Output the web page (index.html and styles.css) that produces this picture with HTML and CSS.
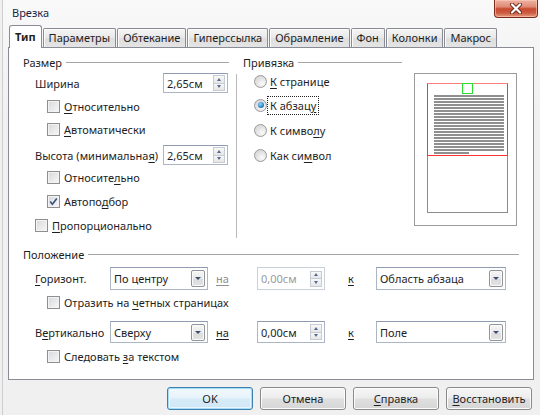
FILE: index.html
```html
<!DOCTYPE html>
<html lang="ru">
<head>
<meta charset="utf-8">
<title>Врезка</title>
<link rel="stylesheet" href="styles.css">
</head>
<body>
<div class="window">
  <div class="titlebar">
    <span class="title">Врезка</span>
    <div class="close">
      <svg width="14" height="11" viewBox="0 0 14 11"><path d="M3 1.5 L11 9.5 M11 1.5 L3 9.5" stroke="#6b2a20" stroke-width="4" stroke-linecap="round"/><path d="M3 1.5 L11 9.5 M11 1.5 L3 9.5" stroke="#fff" stroke-width="2.2" stroke-linecap="round"/></svg>
    </div>
  </div>
  <div class="tabs">
    <div class="tab active">Тип</div>
    <div class="tab">Параметры</div>
    <div class="tab">Обтекание</div>
    <div class="tab">Гиперссылка</div>
    <div class="tab">Обрамление</div>
    <div class="tab">Фон</div>
    <div class="tab">Колонки</div>
    <div class="tab">Макрос</div>
  </div>
  <div class="panel">
    <div class="top">
      <div class="col-size">
        <div class="head"><span>Размер</span><i class="rule"></i></div>
        <div class="row r1"><span class="lbl">Ширина</span><div class="spin"><span>2,65см</span><span class="arrows"><i class="up"></i><i class="down"></i></span></div></div>
        <div class="row r2 ind"><i class="cb"></i><span><u>О</u>тносительно</span></div>
        <div class="row r3 ind"><i class="cb"></i><span><u>А</u>втоматически</span></div>
        <div class="row r4"><span class="lbl">Высота (минимальна<u>я</u>)</span><div class="spin"><span>2,65см</span><span class="arrows"><i class="up"></i><i class="down"></i></span></div></div>
        <div class="row r5 ind"><i class="cb"></i><span>Относите<u>л</u>ьно</span></div>
        <div class="row r6 ind"><i class="cb checked"><svg width="11" height="11" viewBox="0 0 11 11"><path d="M2.2 5.6 L4.4 8.2 L8.8 2.4" fill="none" stroke="#3b4f85" stroke-width="1.6"/></svg></i><span>Автопо<u>д</u>бор</span></div>
        <div class="row r7 ind-s"><i class="cb"></i><span><u>П</u>ропорционально</span></div>
      </div>
      <div class="vsep"></div>
      <div class="col-anchor">
        <div class="head"><span>Привязка</span><i class="rule"></i></div>
        <div class="radio-row a1"><i class="rb"></i><span><u>К</u> странице</span></div>
        <div class="radio-row a2"><i class="rb on"></i><span class="focus">К абзац<u>у</u></span></div>
        <div class="radio-row a3"><i class="rb"></i><span>К симво<u>л</u>у</span></div>
        <div class="radio-row a4"><i class="rb"></i><span>Как си<u>м</u>вол</span></div>
      </div>
      <div class="preview">
        <div class="page">
          <div class="frame">
            <div class="anchor"></div>
            <div class="lines"></div>
            <div class="short"></div>
          </div>
        </div>
      </div>
    </div>
    <div class="position">
      <div class="head"><span>Положение</span><i class="rule"></i></div>
      <div class="prow p1">
        <span class="lbl"><u>Г</u>оризонт.</span>
        <div class="combo"><span>По центру</span><i class="drop"></i></div>
        <span class="na dis"><u>на</u></span>
        <div class="spin dis"><span>0,00см</span><span class="arrows"><i class="up"></i><i class="down"></i></span></div>
        <span class="k"><u>к</u></span>
        <div class="combo wide"><span>Область абзаца</span><i class="drop"></i></div>
      </div>
      <div class="row p2 ind"><i class="cb"></i><span>Отразить на <u>ч</u>етных страницах</span></div>
      <div class="prow p3">
        <span class="lbl">В<u>е</u>ртикально</span>
        <div class="combo"><span>Сверху</span><i class="drop"></i></div>
        <span class="na"><u>на</u></span>
        <div class="spin"><span>0,00см</span><span class="arrows"><i class="up"></i><i class="down"></i></span></div>
        <span class="k"><u>к</u></span>
        <div class="combo wide"><span>Поле</span><i class="drop"></i></div>
      </div>
      <div class="row p4 ind"><i class="cb"></i><span>Следовать <u>з</u>а текстом</span></div>
    </div>
  </div>
  <div class="buttons">
    <div class="btn default">OK</div>
    <div class="btn">Отмена</div>
    <div class="btn"><u>С</u>правка</div>
    <div class="btn"><u>В</u>осстановить</div>
  </div>
</div>
</body>
</html>
```
FILE: styles.css
```css
html, body {
  margin: 0;
  padding: 0;
}
body {
  width: 540px;
  height: 415px;
  overflow: hidden;
  background: #f0f0f0;
  font-family: "Noto Sans", "Open Sans", "DejaVu Sans", sans-serif;
  font-size: 11px;
  color: #1e1e1e;
}
u { text-decoration: underline; text-underline-offset: 2px; }

.window {
  margin-left: 2px;
  height: 415px;
  border-left: 1px solid #cfcfcf;
  background: linear-gradient(#f9f9f9 0, #f4f4f4 60px, #f0f0f0 120px);
}

/* title bar */
.titlebar {
  height: 25px;
  display: flex;
  justify-content: space-between;
  align-items: flex-start;
}
.title {
  padding: 5px 0 0 9px;
  line-height: 16px;
  color: #1b2444;
}
.close {
  width: 44px;
  height: 18px;
  margin-right: 2px;
  box-sizing: border-box;
  border: 1px solid #7c2a1c;
  border-top: none;
  border-radius: 0 0 4px 4px;
  background: linear-gradient(#eeb3a4 0%, #e08a74 40%, #c74a30 52%, #cc5a3e 75%, #e39a80 100%);
  box-shadow: inset 0 0 0 1px rgba(255, 210, 195, 0.55);
  display: flex;
  align-items: center;
  justify-content: center;
}

/* tabs */
.tabs {
  height: 22px;
  display: flex;
  align-items: flex-end;
  padding-left: 6px;
}
.tab {
  height: 19px;
  box-sizing: border-box;
  padding: 0 5px;
  margin-right: 1px;
  border: 1px solid #898c95;
  border-bottom: none;
  border-radius: 2px 2px 0 0;
  background: linear-gradient(#f5f5f5, #e8e8e8 50%, #dedede 51%, #e4e4e4);
  box-shadow: inset 1px 1px 0 #fbfbfb;
  line-height: 17px;
  color: #1e1e1e;
}
.tab.active {
  position: relative;
  z-index: 1;
  height: 23px;
  margin-bottom: -1px;
  background: #fff;
  box-shadow: none;
  border-radius: 3px 3px 0 0;
  font-weight: bold;
  line-height: 21px;
  padding: 0 5px;
}

/* panel */
.panel {
  margin-left: 5px;
  width: 526px;
  height: 333px;
  box-sizing: border-box;
  border: 1px solid #898c95;
  background: #fff;
  padding: 6px 0 0 14px;
}
.top {
  display: flex;
  height: 184px;
}
.head {
  height: 16px;
  display: flex;
  align-items: center;
}
.head .rule {
  flex: 1;
  height: 1px;
  margin-left: 4px;
  background: #a5a5a5;
}

.col-size { width: 206px; }
.row {
  height: 22px;
  display: flex;
  align-items: center;
}
.row .lbl { flex: 1; padding-left: 12px; white-space: nowrap; }
.r1 { height: 20px; margin-top: 3px; }
.r2 { margin-top: 2px; }
.r3 { margin-top: 1px; }
.r4 { height: 20px; margin-top: 5px; }
.r5 { margin-top: 1px; }
.r6 { margin-top: 2px; }
.r7 { margin-top: 2px; }
.ind { padding-left: 24px; }
.ind-s { padding-left: 12px; }

.cb {
  width: 13px;
  height: 13px;
  box-sizing: border-box;
  margin-right: 4px;
  border: 1px solid #8f8f8f;
  background: linear-gradient(135deg, #d6d8dc, #f8f8f8);
  box-shadow: inset 0 0 0 1px #f3f3f3;
  display: flex;
  align-items: center;
  justify-content: center;
  flex: none;
}

.spin {
  width: 65px;
  height: 20px;
  box-sizing: border-box;
  margin-right: 1px;
  border: 1px solid #abb5c4;
  border-top-color: #8e9bb0;
  background: #fff;
  display: flex;
  align-items: center;
  justify-content: space-between;
  padding: 0 2px 0 3px;
  flex: none;
}
.spin.dis { color: #9a9a9a; border-color: #c9d0da; }
.arrows {
  width: 12px;
  height: 16px;
  display: flex;
  flex-direction: column;
}
.arrows i {
  flex: 1;
  box-sizing: border-box;
  border: 1px solid #c7ccd4;
  background: linear-gradient(#f8f8f8, #e6e6e6);
  display: flex;
  align-items: center;
  justify-content: center;
}
.arrows i + i { border-top: none; }
.arrows .up::after {
  content: "";
  border-left: 2.5px solid transparent;
  border-right: 2.5px solid transparent;
  border-bottom: 3px solid #56698f;
}
.arrows .down::after {
  content: "";
  border-left: 2.5px solid transparent;
  border-right: 2.5px solid transparent;
  border-top: 3px solid #56698f;
}

.vsep {
  width: 1px;
  height: 164px;
  margin: 20px 6px 0 7px;
  background: #b9b9b9;
}

.col-anchor { width: 159px; }
.radio-row {
  height: 22px;
  display: flex;
  align-items: center;
  padding-left: 11px;
}
.a1 { margin-top: 0; }
.a2 { margin-top: 2px; }
.a3 { margin-top: 3px; }
.a4 { margin-top: 3px; }
.rb {
  width: 13px;
  height: 13px;
  box-sizing: border-box;
  margin-right: 3px;
  border-radius: 50%;
  border: 1px solid #9a9a9a;
  background: radial-gradient(circle at 65% 70%, #fafafa, #dadada 70%);
  display: flex;
  align-items: center;
  justify-content: center;
  flex: none;
}
.rb.on::after {
  content: "";
  width: 6px;
  height: 6px;
  border-radius: 50%;
  background: radial-gradient(circle at 40% 35%, #8fd6ff, #1a78b8 70%, #0e4f82);
}
.focus {
  outline: 1px dotted #222;
  outline-offset: 1px;
  padding: 0 1px;
  margin-left: -1px;
}

.preview {
  width: 103px;
  height: 153px;
  box-sizing: border-box;
  margin: 19px 0 0 12px;
  border: 1px solid #9b9b9b;
  background: #fff;
}
.page {
  width: 81px;
  height: 130px;
  box-sizing: border-box;
  margin: 9px 0 0 12px;
  border: 1px solid #8c8c8c;
}
.frame {
  height: 73px;
  margin: -1px -1px 0;
  box-sizing: border-box;
  border: 1px solid #ff3434;
  border-top-color: #ff8080;
}
.anchor {
  width: 11px;
  height: 11px;
  box-sizing: border-box;
  margin: -1px auto 0;
  border: 1px solid #2ee02e;
}
.lines {
  width: 70px;
  height: 56px;
  margin: 1px 0 0 6px;
  background: repeating-linear-gradient(#8f8f8f 0, #8f8f8f 2px, transparent 2px, transparent 3px);
}
.short {
  width: 35px;
  height: 2px;
  margin: 1px 0 0 6px;
  background: #8f8f8f;
}

/* position */
.position {
  width: 496px;
  margin-top: 8px;
}
.prow {
  display: grid;
  grid-template-columns: 75px 98px 49px 68px 51px 130px;
  align-items: center;
  padding-left: 12px;
}
.p1 { height: 23px; margin-top: 5px; }
.p2 { margin-top: 1px; }
.p3 { height: 22px; margin-top: 8px; }
.p4 { margin-top: 2px; }
.prow .spin { width: 68px; height: 100%; margin: 0; }
.na { padding-left: 8px; }
.na.dis { color: #8f8f8f; }
.k { padding-left: 23px; }
.combo {
  height: 100%;
  box-sizing: border-box;
  border: 1px solid #abb5c4;
  border-top-color: #8e9bb0;
  background: #fff;
  display: flex;
  align-items: center;
  justify-content: space-between;
  padding: 0 2px 0 3px;
}
.drop {
  width: 14px;
  height: 17px;
  box-sizing: border-box;
  border: 1px solid #8f9499;
  border-radius: 2px;
  background: linear-gradient(#f6f6f6, #e9e9e9 50%, #dcdcdc 51%, #e2e2e2);
  box-shadow: inset 0 0 0 1px #fbfbfb;
  display: flex;
  align-items: center;
  justify-content: center;
}
.drop::after {
  content: "";
  border-left: 3px solid transparent;
  border-right: 3px solid transparent;
  border-top: 3px solid #3f4f72;
}

/* buttons */
.buttons {
  display: flex;
  justify-content: flex-end;
  gap: 7px;
  padding-right: 8px;
  margin-top: 7px;
}
.btn {
  width: 86px;
  height: 23px;
  box-sizing: border-box;
  border: 1px solid #8a8a8a;
  border-radius: 3px;
  background: linear-gradient(#f6f6f6, #ececec 48%, #dfdfdf 52%, #d6d6d6);
  box-shadow: inset 0 0 0 1px #fcfcfc;
  text-align: center;
  line-height: 21px;
}
.btn.default {
  border-color: #3c7fb1;
  box-shadow: inset 0 0 0 1px #a8dcf5, inset 0 0 0 2px #e8f6fd;
  background: linear-gradient(#f2f9fd, #e6f2fa 48%, #d6ebf8 52%, #cfe6f5);
}
```
